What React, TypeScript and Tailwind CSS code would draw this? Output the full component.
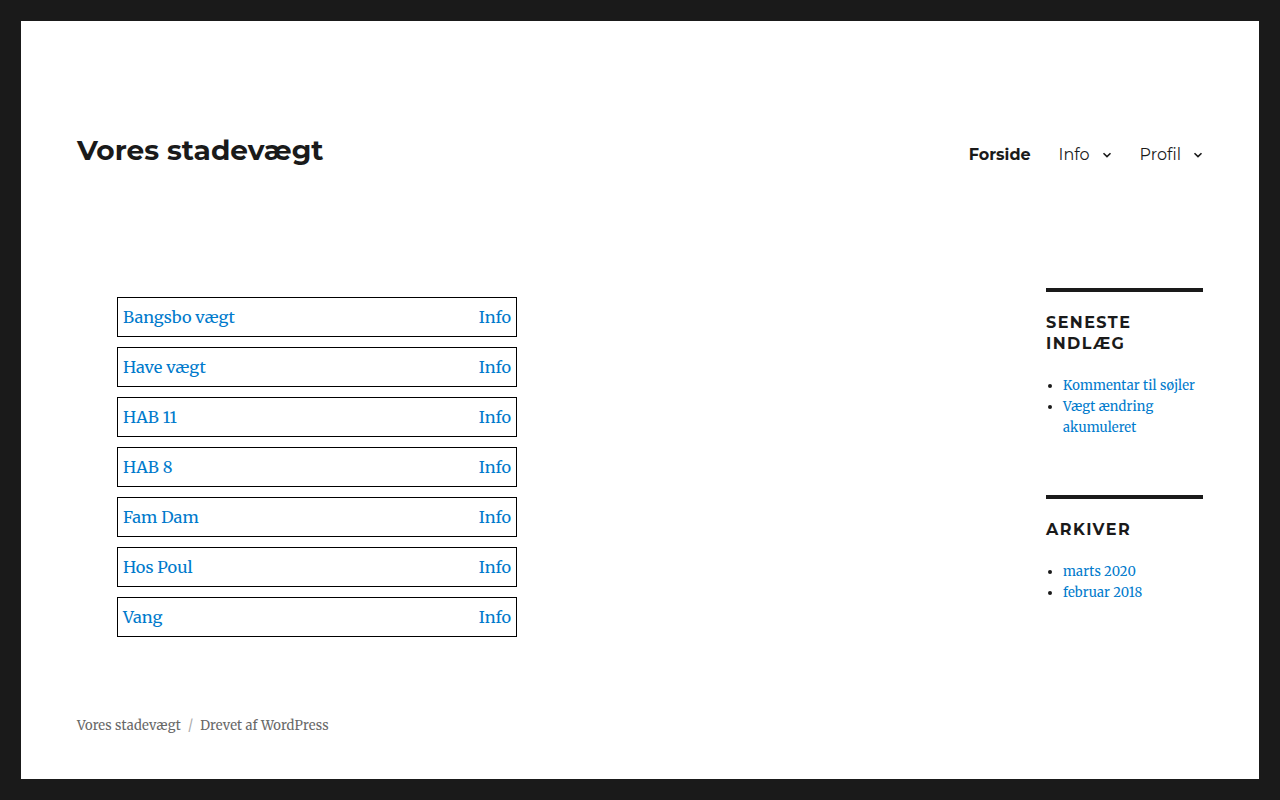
import React from 'react';

const sans = "font-['Montserrat','Inter','Noto_Sans',sans-serif]";
const serif = "font-['Merriweather','DejaVu_Serif',serif]";

const rows = ['Bangsbo vægt', 'Have vægt', 'HAB 11', 'HAB 8', 'Fam Dam', 'Hos Poul', 'Vang'];

function Chevron() {
  return (
    <svg width="10" height="10" viewBox="0 0 10 10" className="ml-[12px] mt-[1px]">
      <path d="M1.5 3.2 L5 6.6 L8.5 3.2" fill="none" stroke="#1a1a1a" strokeWidth="1.6" />
    </svg>
  );
}

function Widget({ title, items }: { title: string[]; items: string[] }) {
  return (
    <section className="border-t-4 border-[#1a1a1a] pt-[20px]">
      <h2 className={`${sans} text-[16px] leading-[21px] font-bold uppercase tracking-[0.09em] text-[#1a1a1a]`}>
        {title.map((t) => (
          <div key={t}>{t}</div>
        ))}
      </h2>
      <ul className={`${serif} mt-[21px] list-disc pl-[17px] text-[13px] leading-[21px] tracking-[0.01em] text-[#1a1a1a]`}>
        {items.map((i) => (
          <li key={i}>
            <a className="text-[#007acc]">{i}</a>
          </li>
        ))}
      </ul>
    </section>
  );
}

export default function App() {
  return (
    <div className="h-[800px] w-full bg-[#1a1a1a] p-[21px]">
      <div className="flex h-full flex-col bg-white px-[56px]">
        {/* Header */}
        <header className="flex items-start justify-between pt-[112px]">
          <h1 className={`${sans} text-[28px] leading-[35px] font-bold text-[#1a1a1a]`}>Vores stadevægt</h1>
          <nav className={`${sans} mt-[11px] flex items-center text-[16px] leading-[21px] text-[#1a1a1a]`}>
            <a className="font-bold">Forside</a>
            <a className="ml-[28px] flex items-center">
              Info
              <Chevron />
            </a>
            <a className="ml-[28px] flex items-center">
              Profil
              <Chevron />
            </a>
          </nav>
        </header>

        {/* Main + sidebar */}
        <div className="mt-[120px] flex justify-between">
          <main className="pl-[40px] pt-[9px]">
            <div className="flex flex-col gap-[10px]">
              {rows.map((r) => (
                <div
                  key={r}
                  className={`${serif} flex h-[40px] w-[400px] items-center justify-between border border-black px-[5px] text-[16.4px] text-[#007acc]`}
                >
                  <a>{r}</a>
                  <a>Info</a>
                </div>
              ))}
            </div>
          </main>
          <aside className="flex w-[157px] flex-col gap-[57px]">
            <Widget title={['Seneste', 'indlæg']} items={['Kommentar til søjler', 'Vægt ændring akumuleret']} />
            <Widget title={['Arkiver']} items={['marts 2020', 'februar 2018']} />
          </aside>
        </div>

        {/* Footer */}
        <footer className={`${serif} mt-auto flex items-center pb-[43px] text-[13px] leading-[21px] tracking-[0.01em] text-[#686868]`}>
          <span>Vores stadevægt</span>
          <span className="mx-[7px] text-[#aaa]">/</span>
          <span>Drevet af WordPress</span>
        </footer>
      </div>
    </div>
  );
}
